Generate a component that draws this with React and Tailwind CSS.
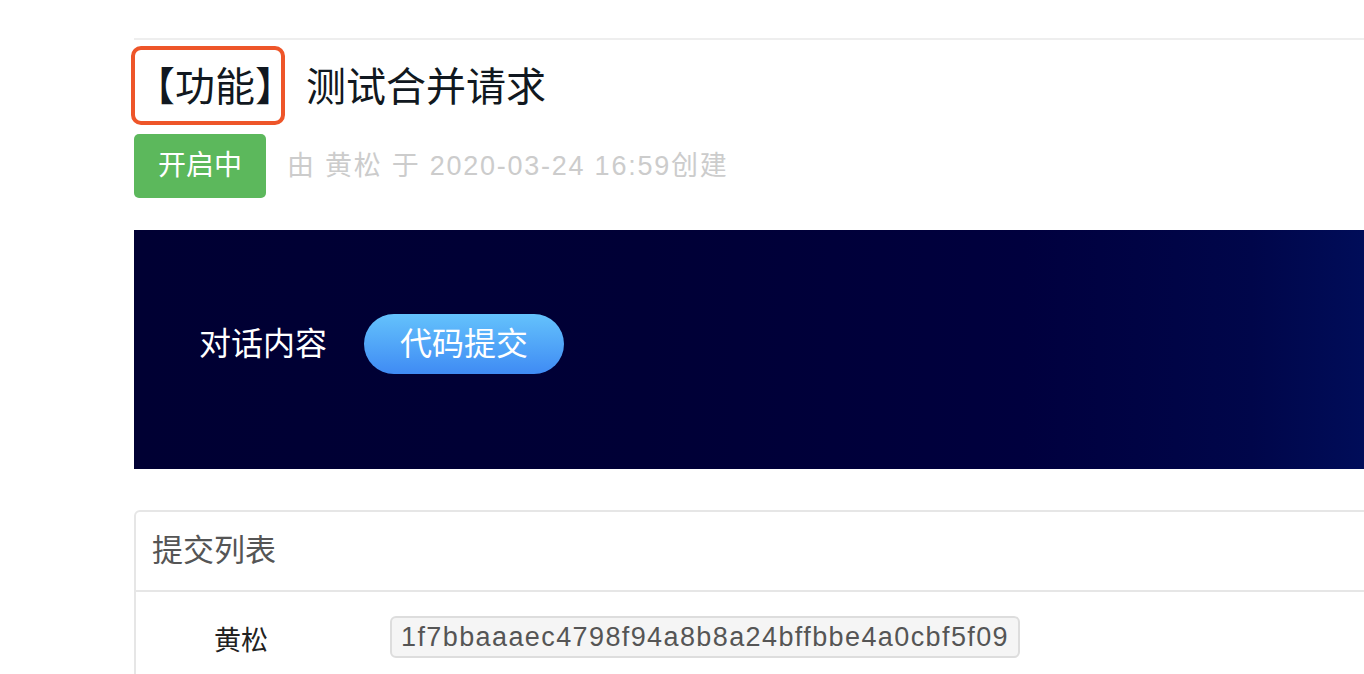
export default function App() {
  const font = { fontFamily: '"Liberation Sans", "Noto Sans CJK SC", sans-serif' };

  return (
    <div style={font} className="w-full h-screen overflow-hidden bg-white pl-[134px] pt-[38px]">
      <div className="w-[calc(100%+40px)]">
        <div className="h-[2px] bg-[#eeeeee]" />

        {/* Title */}
        <div className="relative h-[94px] flex items-center text-[40px] leading-none text-[#111820]">
          <span className="ml-[1px]">【功能】</span>
          <span className="ml-[11px]">测试合并请求</span>
          <div className="absolute left-[-3px] top-[6px] w-[154px] h-[79px] border-4 border-[#ee5529] rounded-[10px]" />
        </div>

        {/* Status */}
        <div className="flex items-center">
          <div className="w-[132px] h-[64px] rounded-[5px] bg-[#5cb85c] text-white text-[28px] flex items-center justify-center">
            开启中
          </div>
          <div className="ml-[21px] text-[27px] text-[#cccccc] tracking-[1.75px]">由 黄松 于 2020-03-24 16:59创建</div>
        </div>

        {/* Banner */}
        <div className="mt-[32px] h-[239px] flex items-center pl-[65px] pb-[11px] bg-[linear-gradient(90deg,#000033_0%,#000036_40%,#00003e_70%,#00064a_88%,#000f5e_100%)]">
          <span className="text-white text-[32px]">对话内容</span>
          <button className="ml-[37px] w-[200px] h-[60px] rounded-full bg-[linear-gradient(180deg,#64c2fc,#3f8bf4)] text-white text-[32px] flex items-center justify-center">
            代码提交
          </button>
        </div>

        {/* Commit list */}
        <div className="mt-[41px] border-2 border-[#e6e6e6] rounded-tl-[6px]">
          <div className="h-[80px] flex items-center pl-[16px] text-[31px] text-[#555555] border-b-2 border-[#e6e6e6]">
            提交列表
          </div>
          <div className="h-[90px] flex items-start pt-[21px]">
            <div className="w-[254px] pl-[78px] pt-[8px] text-[27px] text-[#222222]">黄松</div>
            <div className="mt-[3px] h-[42px] px-[9px] flex items-center border-2 border-[#dddddd] bg-[#f5f5f5] rounded-[6px] text-[27px] tracking-[1.4px] text-[#555555]">
              1f7bbaaaec4798f94a8b8a24bffbbe4a0cbf5f09
            </div>
          </div>
        </div>
      </div>
    </div>
  );
}
